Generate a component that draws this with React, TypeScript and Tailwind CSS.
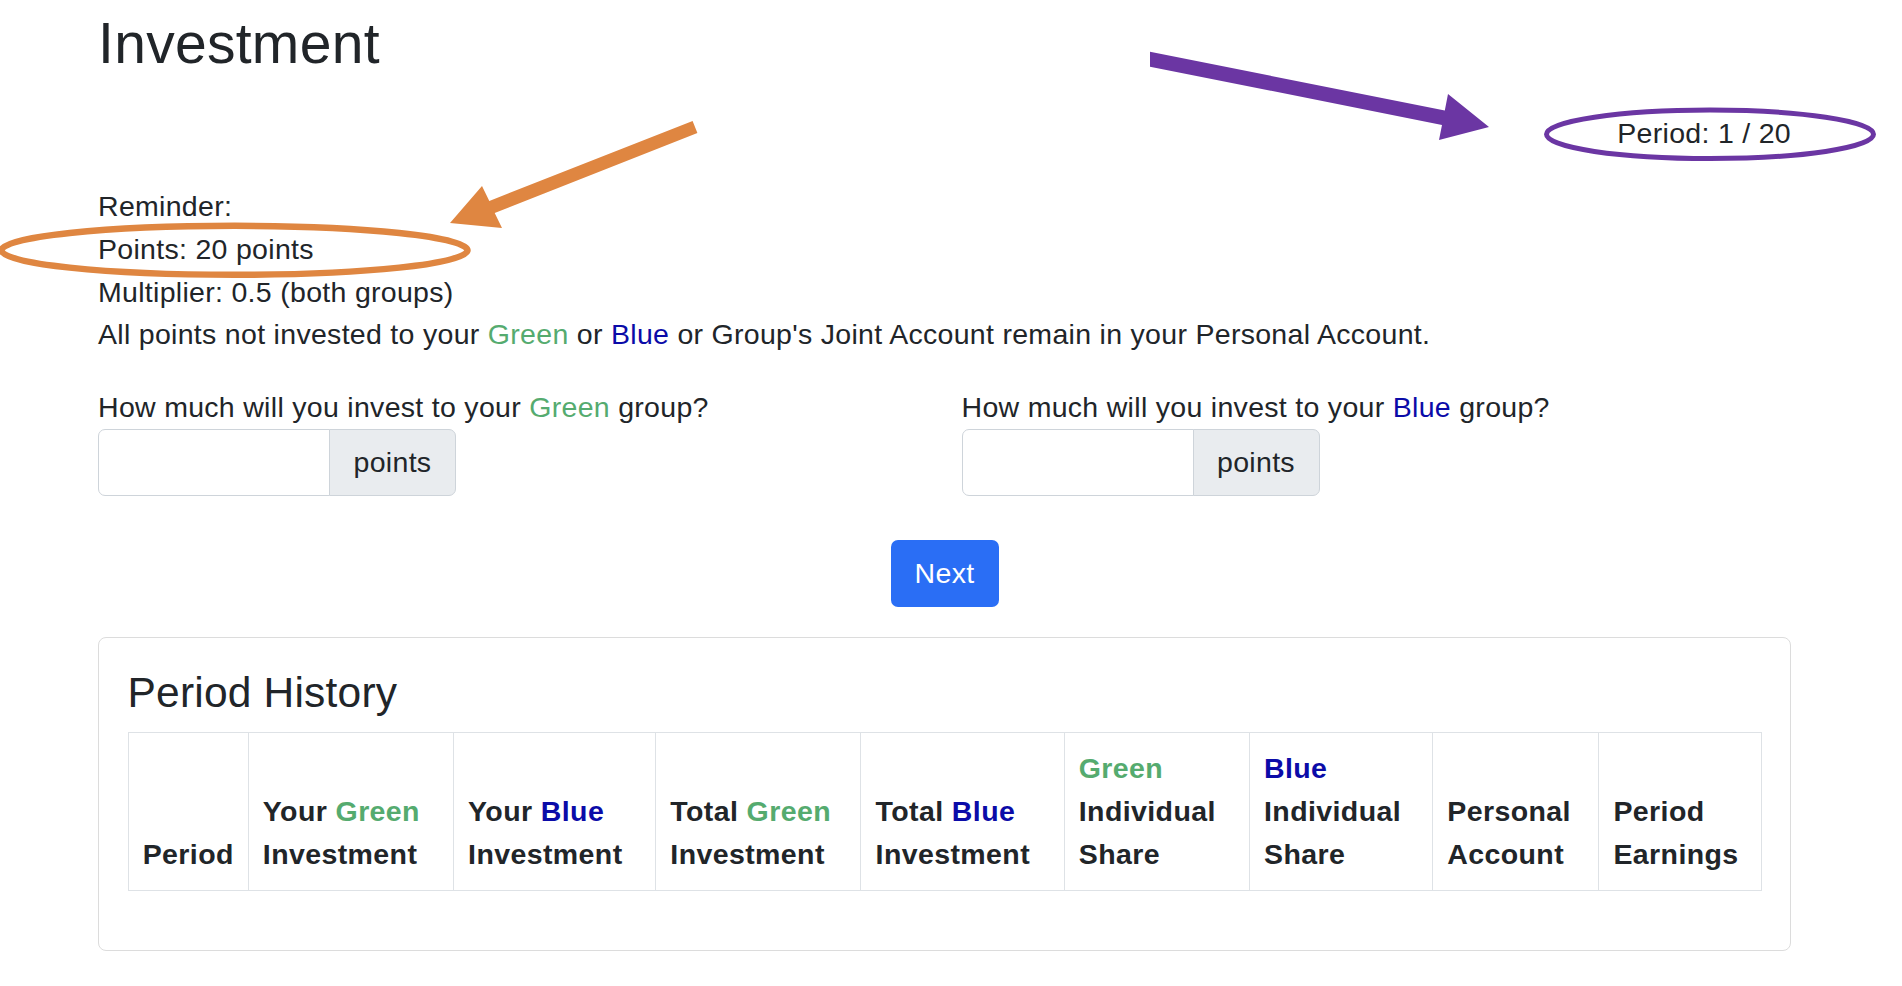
const green = "text-[#55ab6f]";
const blue = "text-[#0b0ba8]";

function PointsInput() {
  return (
    <div className="flex h-[67px] w-[358px]">
      <input
        type="text"
        className="h-full w-[232px] rounded-l-[7px] border border-[#ced4da] bg-white px-[21px] outline-none"
      />
      <span className="-ml-px flex h-full flex-1 items-center justify-center rounded-r-[7px] border border-[#ced4da] bg-[#e9ecef]">
        points
      </span>
    </div>
  );
}

const columns = [
  { w: "w-[120px]", label: <>Period</> },
  { w: "w-[205px]", label: <>Your <span className={green}>Green</span> Investment</> },
  { w: "w-[202px]", label: <>Your <span className={blue}>Blue</span> Investment</> },
  { w: "w-[205px]", label: <>Total <span className={green}>Green</span> Investment</> },
  { w: "w-[203px]", label: <>Total <span className={blue}>Blue</span> Investment</> },
  { w: "w-[185px]", label: <><span className={green}>Green</span> Individual Share</> },
  { w: "w-[183px]", label: <><span className={blue}>Blue</span> Individual Share</> },
  { w: "w-[166px]", label: <>Personal Account</> },
  { w: "w-[162px]", label: <>Period Earnings</> },
];

function Annotations() {
  return (
    <svg
      className="pointer-events-none absolute left-0 top-0"
      width="1902"
      height="986"
      viewBox="0 0 1902 986"
    >
      <ellipse cx="234.5" cy="250.3" rx="233" ry="24.5" fill="none" stroke="#df8641" strokeWidth="6.5" />
      <polygon
        points="450,223 482,186 489.3,200.9 692.6,120.9 697.4,133.1 494.7,213.1 502,228"
        fill="#df8641"
      />
      <ellipse cx="1710" cy="134.3" rx="163.5" ry="24.2" fill="none" stroke="#6b36a3" strokeWidth="5" />
      <polygon
        points="1150,51.7 1444.8,110.5 1448,94 1489,127 1439,140 1442,124.9 1150,66.7"
        fill="#6b36a3"
      />
    </svg>
  );
}

export default function App() {
  return (
    <div className="relative min-h-screen bg-white font-['Liberation_Sans',Arial,sans-serif] text-[28.5px] leading-[42.75px] tracking-[0.3px] text-[#212529]">
      <div className="pl-[98px] pt-[9px]">
        <div className="w-[1693px]">
          <h2 className="text-[57px] leading-[68.4px] font-medium tracking-[0.3px]">Investment</h2>

          <div className="mt-[35px] text-right">Period: 1 / 20</div>

          <p className="mt-[30px]">
            Reminder:
            <br />
            Points: 20 points
            <br />
            Multiplier: 0.5 (both groups)
            <br />
            All points not invested to your <span className={green}>Green</span> or{" "}
            <span className={blue}>Blue</span> or Group's Joint Account remain in your Personal Account.
          </p>

          <div className="mt-[30px] grid grid-cols-2 gap-x-[34px]">
            <div>
              <div>
                How much will you invest to your <span className={green}>Green</span> group?
              </div>
              <PointsInput />
            </div>
            <div>
              <div>
                How much will you invest to your <span className={blue}>Blue</span> group?
              </div>
              <PointsInput />
            </div>
          </div>

          <div className="mt-[44px] flex justify-center">
            <button className="h-[67px] w-[108px] rounded-[7px] bg-[#2a6ef5] text-white">Next</button>
          </div>

          <div className="mt-[30px] rounded-[8px] border border-[#dcdcdc] px-[28.5px] pt-[29px] pb-[30px]">
            <h4 className="mb-[14px] text-[42.5px] leading-[51px] font-medium tracking-[0.2px]">Period History</h4>
            <table className="mb-[28.5px] w-full table-fixed border-collapse">
              <thead>
                <tr>
                  {columns.map((c, i) => (
                    <th
                      key={i}
                      className={`${c.w} border border-[#dee2e6] px-[14.2px] py-[14.5px] text-left align-bottom font-bold tracking-[0.4px]`}
                    >
                      {c.label}
                    </th>
                  ))}
                </tr>
              </thead>
            </table>
          </div>
        </div>
      </div>
      <Annotations />
    </div>
  );
}
